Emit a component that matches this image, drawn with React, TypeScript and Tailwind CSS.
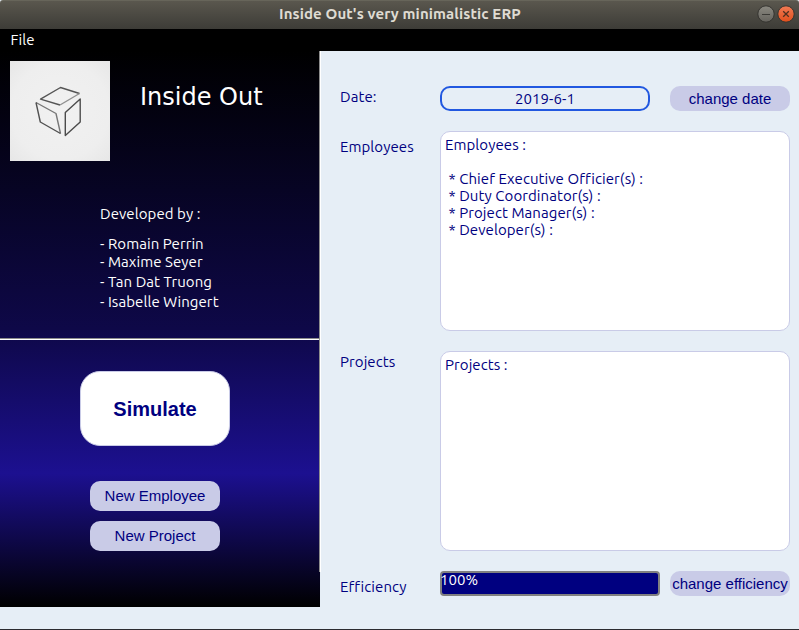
import React from "react";

const buttonBase =
  "flex items-center justify-center whitespace-nowrap bg-[#c9cbe7] font-['Liberation_Sans',sans-serif] text-[15px] leading-none tracking-normal text-[#000080]";

function TitleBar() {
  return (
    <header className="flex h-[29px] items-center rounded-t-[3px] border-t border-[#67655a] bg-linear-to-b from-[#5a574e] to-[#3d3c37] pr-1 pb-[2px]">
      <h1 className="flex-1 pb-[2px] pl-[43px] text-center text-[15px] leading-none font-bold tracking-[0.1px] text-[#dfdbd2]">
        Inside Out's very minimalistic ERP
      </h1>
      <div className="flex gap-[2px]">
        <svg width="18" height="18" viewBox="0 0 18 18">
          <defs>
            <linearGradient id="min" x2="0" y2="1">
              <stop stopColor="#8b8981" />
              <stop offset="1" stopColor="#65635d" />
            </linearGradient>
          </defs>
          <circle cx="9" cy="9" r="8.2" fill="url(#min)" stroke="#34332f" />
          <path d="M5 9.5h8" stroke="#3c3b37" />
        </svg>
        <svg width="18" height="18" viewBox="0 0 18 18">
          <defs>
            <linearGradient id="close" x2="0" y2="1">
              <stop stopColor="#f27b55" />
              <stop offset="1" stopColor="#e04f1c" />
            </linearGradient>
          </defs>
          <circle cx="9" cy="9" r="8.2" fill="url(#close)" stroke="#34332f" />
          <path d="M6.2 6.2l5.6 5.6M11.8 6.2l-5.6 5.6" stroke="#50301f" strokeWidth="1.3" />
        </svg>
      </div>
    </header>
  );
}

function Logo() {
  return (
    <svg width="100" height="100" viewBox="0 0 100 100">
      <defs>
        <radialGradient id="paper" r=".75">
          <stop stopColor="#f1f1f1" />
          <stop offset=".65" stopColor="#eeeeee" />
          <stop offset="1" stopColor="#e5e5e5" />
        </radialGradient>
      </defs>
      <rect width="100" height="100" fill="url(#paper)" />
      <g fill="none" strokeWidth="1.4" strokeLinejoin="round">
        <path d="M50 44L30.500 38.200L50.500 26.500L69.500 32.500" stroke="#555" />
        <path d="M69.500 32.500L50 44" stroke="#909090" />
        <path d="M26 41.500L46 52.500L50.500 72.500" stroke="#777" />
        <path d="M50.500 72.500L30.300 61L26 41.500" stroke="#505050" />
        <path d="M70.200 38L55.300 51.500V74.500L70.200 61Z" stroke="#4c4c4c" />
      </g>
    </svg>
  );
}

function Sidebar() {
  return (
    <aside className="flex h-[556px] w-[320px] flex-col bg-[linear-gradient(to_bottom,#000_0%,#0e0848_50%,#1c1090_76%,#000_100%)] text-white">
      <div className="flex h-[153px] pt-[10px] pl-[10px]">
        <Logo />
        <h2 className="ml-[30px] pt-[21px] font-['DejaVu_Sans',sans-serif] text-[24px] leading-[30px] tracking-normal">
          Inside Out
        </h2>
      </div>
      <div className="h-[134px] pl-[100px] leading-[20px]">
        <p className="mb-[10px]">Developed by :</p>
        <p className="h-[18px]">- Romain Perrin</p>
        <p className="h-[20px]">- Maxime Seyer</p>
        <p className="h-[20px]">- Tan Dat Truong</p>
        <p>- Isabelle Wingert</p>
      </div>
      <div className="h-[2px] w-[319px] border-t border-[#8c8c8c] bg-white" />
      <div className="flex flex-col items-center pt-[31px] pr-[10px]">
        <button className="mb-[35px] flex h-[75px] w-[150px] items-center justify-center rounded-[20px] border border-[#c9cbe7] bg-white font-['Liberation_Sans',sans-serif] text-[20px] leading-none font-bold tracking-normal text-[#000080]">
          Simulate
        </button>
        <button className={`${buttonBase} mb-[10px] h-[30px] w-[130px] rounded-[10px] pb-[2px]`}>New Employee</button>
        <button className={`${buttonBase} h-[30px] w-[130px] rounded-[10px] pb-[2px]`}>New Project</button>
      </div>
    </aside>
  );
}

const label = "w-[100px] shrink-0 leading-[20px]";
const panel = "w-[350px] rounded-[10px] border border-[#c9cbe7] bg-white pt-[4px] pl-[4px] leading-[17px] whitespace-pre";

function Dashboard() {
  return (
    <main className="flex flex-1 flex-col pt-[35px] pl-[20px]">
      <div className="mb-[20px] flex h-[25px]">
        <span className={`${label} pt-[1px]`}>Date:</span>
        <div className="flex w-[210px] items-center justify-center rounded-[10px] border-2 border-[#2258e0] leading-none">
          2019-6-1
        </div>
        <button className={`${buttonBase} ml-[20px] w-[120px] rounded-[10px]`}>change date</button>
      </div>
      <div className="mb-[20px] flex h-[200px]">
        <span className={`${label} pt-[6px]`}>Employees</span>
        <div className={panel}>
          <p>Employees :</p>
          <p className="mt-[17px]"> * Chief Executive Officier(s) :</p>
          <p> * Duty Coordinator(s) :</p>
          <p> * Project Manager(s) :</p>
          <p> * Developer(s) :</p>
        </div>
      </div>
      <div className="mb-[20px] flex h-[200px]">
        <span className={`${label} pt-[1px]`}>Projects</span>
        <div className={panel}>Projects :</div>
      </div>
      <div className="flex h-[25px]">
        <span className={`${label} pt-[6px]`}>Efficiency</span>
        <div className="w-[220px] rounded-[4px] border-2 border-[#808080] bg-[#000080] leading-[13px] text-white">
          <span className="-ml-[2px] block">100%</span>
        </div>
        <button className={`${buttonBase} ml-[10px] w-[120px] rounded-[10px]`}>change efficiency</button>
      </div>
    </main>
  );
}

export default function App() {
  return (
    <div className="flex h-[630px] w-[799px] flex-col overflow-hidden border-b border-[#2b2b30] bg-[#e6eef6] font-['Ubuntu','Noto_Sans',sans-serif] text-[15px] tracking-[0.07px] text-[#000080]">
      <TitleBar />
      <nav className="h-[22px] bg-black pl-[10.5px] leading-[22px] text-white">File</nav>
      <div className="flex">
        <Sidebar />
        <div className="-ml-px h-[521px] w-[2px] border-l border-[#8c8c8c] bg-white" />
        <div className="-ml-px flex flex-1">
          <Dashboard />
        </div>
      </div>
    </div>
  );
}
